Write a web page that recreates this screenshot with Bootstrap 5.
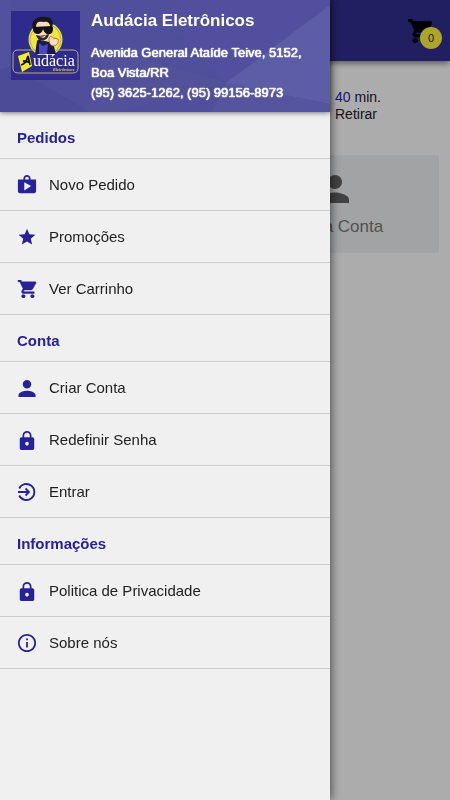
<!DOCTYPE html>
<html lang="pt-BR">
<head>
<meta charset="utf-8">
<meta name="viewport" content="width=device-width, initial-scale=1">
<title>Audácia Eletrônicos</title>
<link href="https://cdn.jsdelivr.net/npm/bootstrap@5.3.0/dist/css/bootstrap.min.css" rel="stylesheet">
<style>
  body { font-family: "Liberation Sans", Arial, sans-serif; font-size: 14px; line-height: 17px; color: #222; background: #f7f7f7; }
  .brand-ink { color: #27229a; }
  .topbar { height: 61px; padding-top: 2px; background: #302c8c; box-shadow: 0 2px 6px rgba(0,0,0,.5); }
  .cart-btn { width: 26px; height: 26px; color: #000; }
  .cart-count { left: 12px; top: 8px; width: 22px; height: 22px; line-height: 22px; font-size: 11px; background: #f5ed3c; color: #222; }
  .pickup { width: 115px; margin-top: 28px; }
  .tile { height: 98px; padding-top: 20px; gap: 12px; background: #e8eaed; color: #757575; font-size: 17px; line-height: 24px; }
  .tile svg { color: #5f5f5f; }
  .tiles { margin-top: 32px; padding: 0 11px; }
  .tiles .col-6 { padding-left: 6px; }
  .shade { background: rgba(0,0,0,.3); }
  .drawer.offcanvas { --bs-offcanvas-width: 330px; background: #f0f0f0; border: 0; box-shadow: 0 0 10px rgba(0,0,0,.7); color: #222; }
  .drawer-head { height: 112px; background: #504f9b; box-shadow: 0 1px 5px rgba(0,0,0,.5); padding: 11px; gap: 11px; }
  .drawer-name { font-size: 17px; line-height: 20px; margin-bottom: 12px; }
  .drawer-address { font-size: 13px; line-height: 20px; color: #f4f4fb; text-shadow: 0 0 1px #fff, 0 0 1px #fff, 0 0 1px #fff; }
  .group-title, .menu-link { font-size: 15px; line-height: 20px; border-bottom: 1px solid #ccc; padding-left: 17px; }
  .group-title { height: 47px; padding-top: 6px; }
  .menu-link { height: 52px; padding-top: 1px; gap: 12px; color: #222; }
  .menu-link svg { color: #27229a; }
</style>
<script src="https://cdn.jsdelivr.net/npm/bootstrap@5.3.0/dist/js/bootstrap.bundle.min.js"></script>
</head>
<body>
<svg class="d-none" aria-hidden="true">
  <symbol id="cart" viewBox="1 2 20 20"><path fill="currentColor" stroke="currentColor" stroke-width=".5" d="M7 18c-1.1 0-1.99.9-1.99 2S5.900 22 7 22s2-.9 2-2-.9-2-2-2zM1 2v2h2l3.600 7.590-1.350 2.450c-.16.280-.25.610-.25.960 0 1.100.9 2 2 2h12v-2H7.420c-.14 0-.25-.11-.25-.25l.03-.12.900-1.630h7.450c.75 0 1.410-.41 1.750-1.030l3.580-6.490A1.003 1.003 0 0 0 20 4H5.210l-.94-2H1zm16 16c-1.100 0-1.990.9-1.990 2s.89 2 1.990 2 2-.9 2-2-.9-2-2-2z"/></symbol>
  <symbol id="person" viewBox="4 4 16 16"><path fill="currentColor" d="M12 12c2.210 0 4-1.790 4-4s-1.790-4-4-4-4 1.790-4 4 1.790 4 4 4zm0 2c-2.670 0-8 1.340-8 4v2h16v-2c0-2.660-5.330-4-8-4z"/></symbol>
  <symbol id="lock" viewBox="1 1 22 21"><path fill="currentColor" d="M18 8h-1V6c0-2.760-2.240-5-5-5S7 3.240 7 6v2H6c-1.100 0-2 .9-2 2v10c0 1.100.9 2 2 2h12c1.100 0 2-.9 2-2V10c0-1.100-.9-2-2-2zm-6 9c-1.100 0-2-.9-2-2s.9-2 2-2 2 .9 2 2-.9 2-2 2zm3.100-9H8.900V6c0-1.710 1.390-3.100 3.100-3.100s3.100 1.390 3.100 3.100v2z"/></symbol>
</svg>

<header class="topbar d-flex justify-content-end align-items-center pe-3">
  <button type="button" class="cart-btn btn p-0 border-0 position-relative d-flex" aria-label="Carrinho">
    <svg width="24" height="24"><use href="#cart"/></svg>
    <span class="cart-count position-absolute rounded-circle text-center">0</span>
  </button>
</header>
<main>
  <p class="pickup ms-auto mb-0"><span class="brand-ink">40</span> min.<br>Retirar</p>
  <div class="tiles">
    <div class="row g-0 justify-content-end">
      <div class="col-6">
        <a href="#" class="tile d-flex flex-column align-items-center text-decoration-none">
          <svg width="28" height="28"><use href="#person"/></svg>
          Minha Conta
        </a>
      </div>
    </div>
  </div>
</main>
<div class="shade position-fixed top-0 start-0 w-100 h-100"></div>

<aside class="drawer offcanvas offcanvas-start show" data-bs-backdrop="false" data-bs-scroll="true" tabindex="-1" aria-label="Menu">
  <div class="drawer-head d-flex position-relative text-white">
    <svg class="position-absolute top-0 start-0 w-100 h-100" viewBox="0 0 330 112" preserveAspectRatio="none" aria-hidden="true">
      <path fill="#52519e" d="M0 0h10v66L0 70z"/><path fill="#4c4b97" d="M0 70l12-4 78 46H0z"/>
      <path fill="#565599" d="M80 112l15-15 14-50 118 36-110 29z" opacity=".4"/>
      <path fill="#5352a0" d="M165 18l61 65L330 5V0H180z" opacity=".6"/>
      <path fill="#5d5ca7" d="M330 5v99L226 83z"/><path fill="#55549f" d="M226 83l104 21v8H212z"/>
    </svg>
    <svg class="position-relative flex-shrink-0" width="69" height="69" viewBox="0 0 69 69" role="img" aria-label="Audácia">
      <path fill="#2e2b8d" d="M0 0h69v69H0z"/>
      <circle cx="34.500" cy="28.500" r="17" fill="#eee83a"/>
      <circle cx="34.500" cy="28.500" r="15.500" fill="none" stroke="#b9ae49"/>
      <path fill="#191850" d="M24 43l2-13c2-3 5-3 8 0l8 2 3 11z"/>
      <path fill="#4a48bd" d="M28 32l4 3 5-2-1 10h-8z"/>
      <path fill="#ffd9bd" d="M23 14c0-9 18-9 18 1v8c-1 9-15 9-17 0z"/>
      <path fill="#ffd9bd" stroke="#805238" stroke-width=".7" d="M38 28c1-4 3-3 4-1l5 1c1 4-1 6-4 7-3 0-5-2-5-7z"/>
      <path fill="#171717" d="M22 17c-3-8 5-12 12-11 7-1 10 6 6 12-1-6-3-8-7-7-6-1-8 0-8 6z"/>
      <path fill="#111" d="M22 16l19-1c2 1 1 8-2 8-3 1-6-1-7-5-1 6-9 7-10 1z"/>
      <path fill="#33251f" d="M25 24c4 1 7 1 13-1-1 8-11 9-13 1z"/><path fill="#fff" d="M28 25q4 2 7-1-1 5-7 1z"/>
      <path fill="#2e2b8d" d="M14 44h43v4H14z"/>
      <path fill="none" stroke="#b8ad74" d="M24 39H7q-5 0-5 5v13q0 5 5 5h55q5 0 5-5V44q0-5-5-5H46"/>
      <path fill="#f5ed22" d="M7 45l11-4 3 14-10 6z"/>
      <path fill="none" stroke="#111" stroke-width="1.800" d="M10 54c4-1 6-5 7-9l2 9m-7-4 6 1"/>
      <text x="22" y="55" font-family="Liberation Serif, serif" font-size="16" fill="#fff">udácia</text>
      <text x="42" y="60" font-family="Liberation Sans, sans-serif" font-size="4" font-weight="700" font-style="italic" fill="#dcc83e">Eletrônicos</text>
    </svg>
    <div class="position-relative">
      <div class="drawer-name fw-bold">Audácia Eletrônicos</div>
      <div class="drawer-address">Avenida General Ataíde Teive, 5152,<br>Boa Vista/RR<br>(95) 3625-1262, (95) 99156-8973</div>
    </div>
  </div>
  <nav>
    <h2 class="group-title brand-ink fw-bold d-flex align-items-center mb-0">Pedidos</h2>
    <a href="#" class="menu-link d-flex align-items-center text-decoration-none">
      <svg width="20" height="20" viewBox="1 1 22 22"><path fill="currentColor" d="M16 6V5c0-2.200-1.800-4-4-4S8 2.800 8 5v1H2v13c0 1.110.89 2 2 2h16c1.110 0 2-.89 2-2V6h-6zm-6-1c0-1.110.89-2 2-2s2 .89 2 2v1h-4V5zM9 18V9l7.500 4L9 18z"/></svg>Novo Pedido</a>
    <a href="#" class="menu-link d-flex align-items-center text-decoration-none">
      <svg width="20" height="20" viewBox="0 1 24 22"><path fill="currentColor" d="M12 17.270 18.180 21l-1.640-7.030L22 9.240l-7.190-.61L12 2 9.190 8.630 2 9.240l5.460 4.730L5.820 21z"/></svg>Promoções</a>
    <a href="#" class="menu-link d-flex align-items-center text-decoration-none">
      <svg width="20" height="18"><use href="#cart"/></svg>Ver Carrinho</a>
    <h2 class="group-title brand-ink fw-bold d-flex align-items-center mb-0">Conta</h2>
    <a href="#" class="menu-link d-flex align-items-center text-decoration-none">
      <svg width="20" height="17"><use href="#person"/></svg>Criar Conta</a>
    <a href="#" class="menu-link d-flex align-items-center text-decoration-none">
      <svg width="20" height="19"><use href="#lock"/></svg>Redefinir Senha</a>
    <a href="#" class="menu-link d-flex align-items-center text-decoration-none">
      <svg width="20" height="20" viewBox="0 0 20 20" fill="none" stroke="currentColor" stroke-width="1.800"><path d="M2.200 6.500a8 8 0 1 1 0 7M1 10h11M8.500 6.500 12 10l-3.500 3.500"/></svg>Entrar</a>
    <h2 class="group-title brand-ink fw-bold d-flex align-items-center mb-0">Informações</h2>
    <a href="#" class="menu-link d-flex align-items-center text-decoration-none">
      <svg width="20" height="19"><use href="#lock"/></svg>Politica de Privacidade</a>
    <a href="#" class="menu-link d-flex align-items-center text-decoration-none">
      <svg width="20" height="20" viewBox="1 1 22 22"><path fill="currentColor" d="M11 17h2v-6h-2v6zm1-15C6.480 2 2 6.480 2 12s4.480 10 10 10 10-4.480 10-10S17.520 2 12 2zm0 18c-4.410 0-8-3.590-8-8s3.590-8 8-8 8 3.590 8 8-3.590 8-8 8zM11 9h2V7h-2v2z"/></svg>Sobre nós</a>
  </nav>
</aside>
</body>
</html>
